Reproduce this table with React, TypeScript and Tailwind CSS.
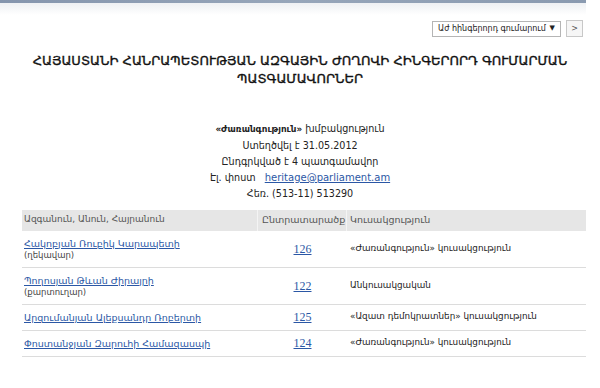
import React from "react";

const rows = [
  { name: "Հակոբյան Ռուբիկ Կարապետի", role: "(ղեկավար)", num: "126", party: "«Ժառանգություն» կուսակցություն" },
  { name: "Պողոսյան Թևան Ժիրայրի", role: "(քարտուղար)", num: "122", party: "Անկուսակցական" },
  { name: "Արզումանյան Ալեքսանդր Ռոբերտի", role: "", num: "125", party: "«Ազատ դեմոկրատներ» կուսակցություն" },
  { name: "Փոստանջյան Զարուհի Համազասպի", role: "", num: "124", party: "«Ժառանգություն» կուսակցություն" },
];

export default function App() {
  return (
    <div
      className="w-[600px] h-[388px] bg-white overflow-hidden text-[#333]"
      style={{ fontFamily: '"DejaVu Sans", "Noto Sans", sans-serif' }}
    >
      <div className="w-[586px] h-[3px] bg-gradient-to-r from-[#8595ad] via-[#97a6ba] to-[#8a9ab0]" />
      <div className="w-[586px] h-[12px] bg-gradient-to-b from-[#eef0f3] to-white" />
      <div className="flex justify-end items-center gap-[5px] pr-[17px] pt-[5px]">
        <div className="w-[129px] h-[16px] border border-[#b5b5b5] flex items-center justify-between px-[5px] text-[8px] text-[#222]">
          <span>Աժ հինգերորդ գումարում</span>
          <span className="text-[7px]">▼</span>
        </div>
        <div className="w-[17px] h-[17px] border border-[#c8c8c8] bg-[#f6f6f6] flex items-center justify-center text-[8px] text-[#555]">
          &gt;
        </div>
      </div>
      <h1 className="mt-[15px] text-center font-normal text-[13px] leading-[18px] text-[#111] whitespace-nowrap [-webkit-text-stroke:0.35px_#111]">
        ՀԱՅԱՍՏԱՆԻ ՀԱՆՐԱՊԵՏՈՒԹՅԱՆ ԱԶԳԱՅԻՆ ԺՈՂՈՎԻ ՀԻՆԳԵՐՈՐԴ ԳՈՒՄԱՐՄԱՆ
        <br />
        ՊԱՏԳԱՄԱՎՈՐՆԵՐ
      </h1>
      <div className="mt-[33px] flex flex-col items-center text-[9.6px] leading-[15.9px] text-[#222]">
        <div>
          <span className="font-bold text-[8.8px]">«Ժառանգություն»</span> խմբակցություն
        </div>
        <div>Ստեղծվել է 31.05.2012</div>
        <div>Ընդգրկված է 4 պատգամավոր</div>
        <div>
          Էլ. փոստ&nbsp;&nbsp;&nbsp;<span className="text-[#2b57a5] underline text-[10px]">heritage@parliament.am</span>
        </div>
        <div>Հեռ. (513-11) 513290</div>
      </div>
      <div className="mt-[8px] ml-[22px] w-[564px]">
        <div className="flex h-[21px] bg-[#e6e6e6] items-center text-[#555]">
          <div className="w-[236px] shrink-0 pl-[2px] border-r border-[#f4f4f4] h-full flex items-center text-[9px]">Ազգանուն, Անուն, Հայրանուն</div>
          <div className="w-[89px] shrink-0 pl-[4px] border-r border-[#f4f4f4] h-full flex items-center text-[9.5px]">Ընտրատարածք</div>
          <div className="flex-1 pl-[3px] text-[9.5px]">Կուսակցություն</div>
        </div>
        {rows.map((r) => (
          <div key={r.num} className={`flex items-center border-b border-[#dcdcdc] ${r.role ? "h-[37px]" : "h-[26px]"}`}>
            <div className="w-[236px] shrink-0 pl-[2px]">
              <div className="text-[#2b57a5] underline text-[9.5px] leading-[13px]">{r.name}</div>
              {r.role && <div className="text-[8.5px] leading-[11px] text-[#444]">{r.role}</div>}
            </div>
            <div className="w-[89px] shrink-0 text-center text-[#2b57a5] underline text-[12px]" style={{ fontFamily: '"Liberation Serif", serif' }}>
              {r.num}
            </div>
            <div className="flex-1 pl-[3px] text-[8.8px] text-[#222]">{r.party}</div>
          </div>
        ))}
      </div>
    </div>
  );
}
